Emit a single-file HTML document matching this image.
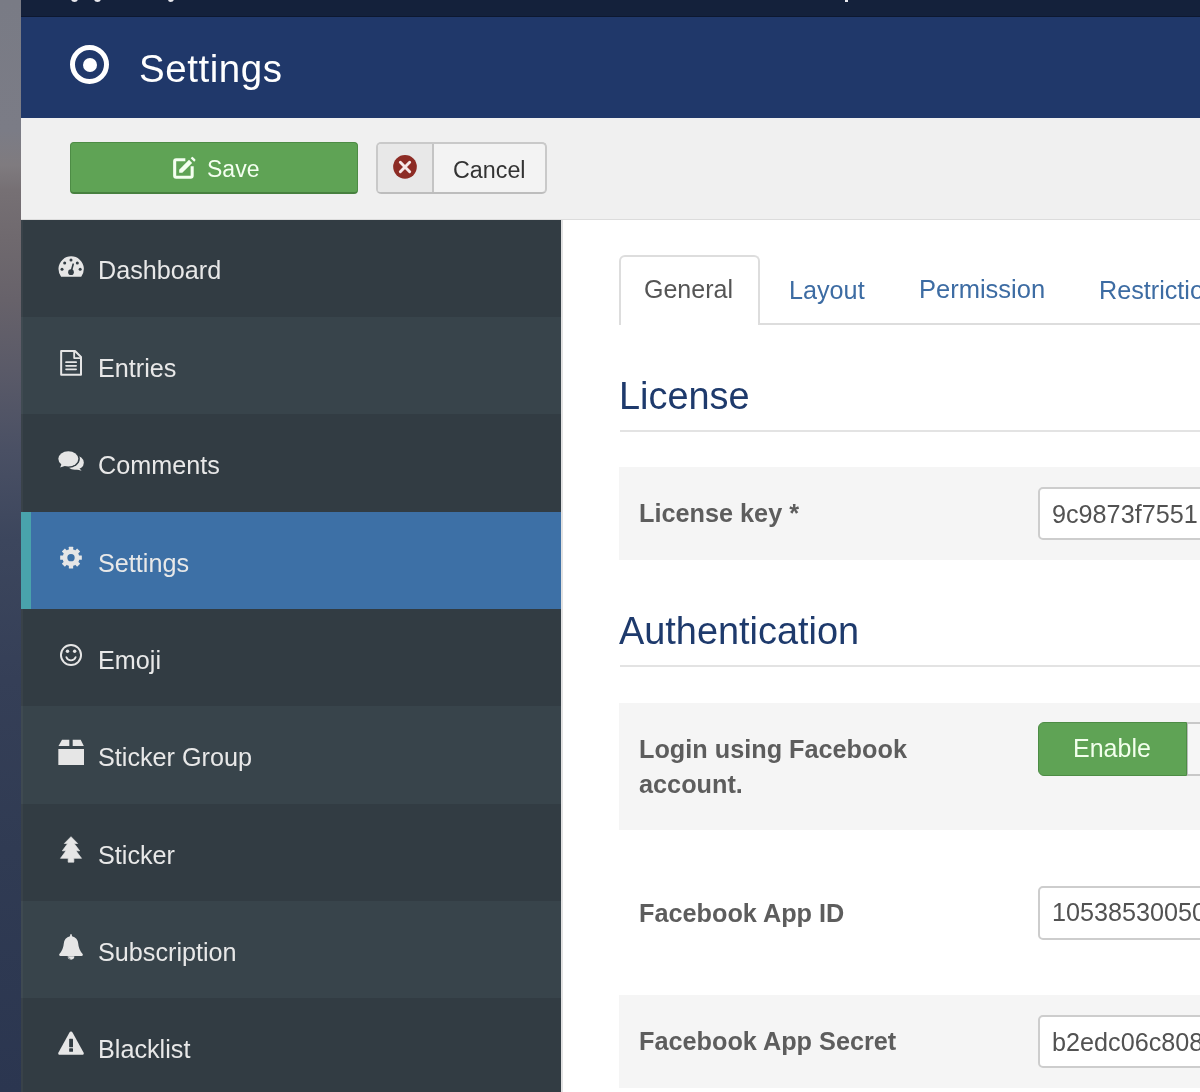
<!DOCTYPE html>
<html><head><meta charset="utf-8">
<style>
*{margin:0;padding:0;box-sizing:border-box}
html,body{width:1200px;height:1092px;overflow:hidden;background:#fff;font-family:"Liberation Sans",sans-serif}
.abs{position:absolute}
#wall{left:0;top:0;width:21px;height:1092px;background:linear-gradient(180deg,#797b85 0px,#7b7c86 130px,#7f7b7f 165px,#767074 190px,#6f696e 240px,#67626a 300px,#5a5a68 370px,#4a5064 450px,#3c465d 540px,#353f57 680px,#303b53 850px,#2b3650 1092px)}
#topbar{left:21px;top:0;width:1179px;height:17px;background:#14213b;border-bottom:1px solid #0d1830}
#header{left:21px;top:17px;width:1179px;height:101px;background:#20386a}
#toolbar{left:21px;top:118px;width:1179px;height:102px;background:#f0f0f0;border-bottom:1.5px solid #dcdcdc}
#sidebar{left:21px;top:220px;width:540px;height:872px;background:#323c43}
#content{left:561px;top:220px;width:639px;height:872px;background:#fff;border-left:2px solid #e2e2e2}
.t{position:absolute;white-space:nowrap;line-height:1}
body{-webkit-font-smoothing:antialiased}
.t,.lbl,.lab,h2,.inp span{will-change:transform}
.item{position:absolute;left:21px;width:540px;height:97.5px;box-shadow:inset 2px 0 0 rgba(255,255,255,0.035)}
.item .lbl{position:absolute;left:77px;top:38.6px;font-size:25.2px;color:#e8e8e8;line-height:1}
.item svg{position:absolute;left:31px;width:40px;height:35px}
.row{position:absolute;left:619px;width:581px;background:#f5f5f5}
.lab{position:absolute;left:639px;font-size:25.25px;font-weight:bold;color:#5d5d5d;line-height:1}
.inp{position:absolute;left:1038px;width:200px;height:53px;background:#fff;border:2px solid #cdcdcd;border-radius:5px}
.inp span{position:absolute;left:12px;top:12.5px;font-size:25.2px;color:#525252;line-height:1}
h2{position:absolute;left:619px;font-size:37.9px;font-weight:normal;color:#1e3a6c;line-height:1}
.hr{position:absolute;left:620px;width:580px;height:2px;background:#e3e3e3}
</style></head><body>
<div id="wall" class="abs"></div>
<div id="topbar" class="abs"></div>
<div class="abs" style="left:71px;top:-2px;width:7px;height:4px;background:#e8e8ee;border-radius:0 0 4px 4px"></div>
<div class="abs" style="left:94px;top:-2px;width:7px;height:4px;background:#e8e8ee;border-radius:0 0 4px 4px"></div>
<div class="abs" style="left:168px;top:-2px;width:6px;height:4px;background:#e8e8ee;border-radius:0 0 4px 3px"></div>
<div class="abs" style="left:845px;top:0px;width:3px;height:2px;background:#e8e8ee"></div>
<div id="header" class="abs"></div>
<div id="toolbar" class="abs"></div>
<div id="sidebar" class="abs"></div>
<div id="content" class="abs"></div>

<!-- header -->
<div class="abs" style="left:70px;top:45px;width:39px;height:39px;border:5px solid #fff;border-radius:50%"></div>
<div class="abs" style="left:82.5px;top:57.5px;width:14px;height:14px;background:#fff;border-radius:50%"></div>
<div class="t" style="left:139px;top:49.5px;font-size:38.5px;color:#fff;letter-spacing:0.55px">Settings</div>

<!-- toolbar -->
<div class="abs" style="left:70px;top:142px;width:288px;height:52px;background:#5fa355;border:1px solid #4d8c45;border-bottom:2px solid #47803f;border-radius:4px"></div>
<svg class="abs" style="left:165px;top:150px;width:40px;height:35px" viewBox="0 0 1200 1050">
 <path d="M610 290 L335 290 Q290 290 290 335 L290 770 Q290 815 335 815 L770 815 Q815 815 815 770 L815 490" fill="none" stroke="#f4fff0" stroke-width="92"/>
 <path d="M425 590 L720 295 L815 390 L520 685 L425 685 Z" fill="#f4fff0"/>
 <path d="M770 245 L800 215 Q820 195 840 215 L905 280 Q925 300 905 320 L875 350 Z" fill="#f4fff0"/>
</svg>
<div class="t" style="left:207px;top:158px;font-size:23px;color:#f4fff0">Save</div>
<div class="abs" style="left:376px;top:142px;width:171px;height:52px;background:#f3f3f3;border:2px solid #c9c9c9;border-bottom-color:#bdbdbd;border-radius:5px"></div>
<div class="abs" style="left:378px;top:144px;width:56px;height:48px;background:#e8e8e8;border-right:2px solid #c4c4c4;border-radius:3px 0 0 3px"></div>
<svg class="abs" style="left:385px;top:150px;width:40px;height:35px" viewBox="0 0 1200 1050">
 <circle cx="600" cy="505" r="355" fill="#8d2c25"/>
 <path d="M460 370 L740 650 M740 370 L460 650" stroke="#f6e8e8" stroke-width="88" stroke-linecap="round"/>
</svg>
<div class="t" style="left:453px;top:159px;font-size:23.3px;color:#333">Cancel</div>

<!-- sidebar items -->
<div class="item" style="top:220px;height:97px;background:#323c43">
  <svg style="top:30px" viewBox="0 0 1200 1050">
  <path d="M273 800 A380 380 0 1 1 877 800 Z" fill="#e6e6e6"/>
  <g fill="#323c43"><circle cx="300" cy="575" r="45"/><circle cx="380" cy="390" r="45"/><circle cx="570" cy="300" r="45"/><circle cx="760" cy="390" r="45"/><circle cx="845" cy="575" r="45"/><circle cx="570" cy="665" r="85"/></g>
  <path d="M570 665 L635 425" stroke="#323c43" stroke-width="48" stroke-linecap="round"/>
 </svg>
 <div class="lbl" style="top:37.6px">Dashboard</div></div>
<div class="item" style="top:317px;background:#38444b">
 <svg style="top:28px" viewBox="0 0 1200 1050">
  <path d="M275 180 L690 180 L870 360 L870 895 L275 895 Z" fill="none" stroke="#e6e6e6" stroke-width="60" stroke-linejoin="round"/>
  <path d="M665 180 L665 392 L870 392" fill="none" stroke="#e6e6e6" stroke-width="55" stroke-linejoin="round"/>
  <path d="M420 515 L725 515 M420 625 L725 625 M420 730 L725 730" stroke="#e6e6e6" stroke-width="50" stroke-linecap="round"/>
 </svg>
 <div class="lbl">Entries</div></div>
<div class="item" style="top:414px;background:#323c43">
 <svg style="top:31px" viewBox="0 0 1200 1050">
  <ellipse cx="690" cy="530" rx="265" ry="215" fill="#e6e6e6"/>
  <path d="M780 660 L890 775 L690 720 Z" fill="#e6e6e6"/>
  <ellipse cx="490" cy="415" rx="345" ry="272" fill="#323c43"/>
  <path d="M250 680 L300 540 L470 640 Z" fill="#323c43"/>
  <ellipse cx="490" cy="415" rx="300" ry="228" fill="#e6e6e6"/>
  <path d="M290 560 L245 675 L430 615 Z" fill="#e6e6e6"/>
 </svg>
 <div class="lbl">Comments</div></div>
<div class="item" style="top:512px;background:#3d70a6">
 <div class="abs" style="left:0;top:0;width:10px;height:97.5px;background:#49a3ac"></div>
 <svg style="top:28px" viewBox="0 0 1200 1050">
  <g fill="#e6e6e6">
   <circle cx="570" cy="530" r="255"/>
   <g id="tooth"><rect x="505" y="205" width="130" height="650" rx="10"/></g>
   <rect x="505" y="205" width="130" height="650" rx="10" transform="rotate(45 570 530)"/>
   <rect x="505" y="205" width="130" height="650" rx="10" transform="rotate(90 570 530)"/>
   <rect x="505" y="205" width="130" height="650" rx="10" transform="rotate(135 570 530)"/>
  </g>
  <circle cx="570" cy="530" r="110" fill="#3d70a6"/>
 </svg>
 <div class="lbl">Settings</div></div>
<div class="item" style="top:609px;background:#323c43">
 <svg style="top:28px" viewBox="0 0 1200 1050">
  <circle cx="570" cy="540" r="302" fill="none" stroke="#e6e6e6" stroke-width="58"/>
  <circle cx="465" cy="430" r="52" fill="#e6e6e6"/><circle cx="680" cy="430" r="52" fill="#e6e6e6"/>
  <path d="M430 605 A150 150 0 0 0 710 605" fill="none" stroke="#e6e6e6" stroke-width="52" stroke-linecap="round"/>
 </svg>
 <div class="lbl">Emoji</div></div>
<div class="item" style="top:706px;background:#38444b">
 <svg style="top:29px" viewBox="0 0 1200 1050">
  <g fill="#e6e6e6">
   <rect x="190" y="420" width="770" height="480"/>
   <path d="M300 145 L520 145 L520 330 L195 330 Z"/>
   <path d="M620 145 L860 145 L955 330 L620 330 Z"/>
  </g>
 </svg>
 <div class="lbl">Sticker Group</div></div>
<div class="item" style="top:804px;background:#323c43">
 <svg style="top:28px" viewBox="0 0 1200 1050">
  <path d="M570 140 L770 345 L665 345 L830 565 L720 565 L885 790 L655 790 L655 905 L485 905 L485 790 L255 790 L420 565 L310 565 L470 345 L370 345 Z" fill="#e6e6e6" stroke="#e6e6e6" stroke-width="20" stroke-linejoin="round"/>
 </svg>
 <div class="lbl">Sticker</div></div>
<div class="item" style="top:901px;background:#38444b">
 <svg style="top:29px" viewBox="0 0 1200 1050">
  <path d="M570 120 Q600 120 600 185 Q770 230 785 400 Q800 600 925 730 Q935 780 890 780 L250 780 Q205 780 215 730 Q340 600 355 400 Q370 230 540 185 Q540 120 570 120 Z" fill="#e6e6e6"/>
  <path d="M470 790 A100 100 0 0 0 670 790 Z" fill="#e6e6e6"/>
  <path d="M490 800 A80 80 0 0 0 560 875" fill="none" stroke="#38444b" stroke-width="14"/>
 </svg>
 <div class="lbl">Subscription</div></div>
<div class="item" style="top:998px;background:#323c43">
 <svg style="top:29px" viewBox="0 0 1200 1050">
  <path d="M570 135 Q600 135 620 170 L950 770 Q970 830 900 830 L240 830 Q170 830 190 770 L520 170 Q540 135 570 135 Z" fill="#e6e6e6"/>
  <rect x="515" y="350" width="115" height="255" rx="15" fill="#323c43"/>
  <rect x="515" y="635" width="115" height="105" rx="15" fill="#323c43"/>
 </svg>
 <div class="lbl">Blacklist</div></div>

<!-- tabs -->
<div class="abs" style="left:620px;top:323px;width:580px;height:2px;background:#ddd"></div>
<div class="abs" style="left:619px;top:255px;width:141px;height:70px;background:#fff;border:2px solid #ddd;border-bottom:none;border-radius:6px 6px 0 0"></div>
<div class="t" style="left:644px;top:277px;font-size:25px;color:#555">General</div>
<div class="t" style="left:789px;top:277.5px;font-size:25.2px;color:#3d6ca3">Layout</div>
<div class="t" style="left:919px;top:277.3px;font-size:25.5px;color:#3d6ca3">Permission</div>
<div class="t" style="left:1099px;top:277.5px;font-size:25.2px;color:#3d6ca3">Restrictions</div>

<!-- License -->
<h2 style="top:378px">License</h2>
<div class="hr" style="top:430px"></div>
<div class="row" style="top:467px;height:93px"></div>
<div class="lab" style="top:501.3px">License key *</div>
<div class="inp" style="top:487px"><span>9c9873f7551</span></div>

<!-- Authentication -->
<h2 style="top:613px">Authentication</h2>
<div class="hr" style="top:665px"></div>
<div class="row" style="top:703px;height:127px"></div>
<div class="lab" style="top:737px">Login using Facebook</div>
<div class="lab" style="top:772px">account.</div>
<div class="abs" style="left:1038px;top:722px;width:149px;height:54px;background:#5fa355;border:1px solid #4d8c45;border-radius:6px 0 0 6px"></div>
<div class="abs" style="left:1187px;top:722px;width:20px;height:54px;background:#f6f6f6;border:2px solid #c8c8c8;border-left:1px solid #bbb"></div>
<div class="t" style="left:1073px;top:736px;font-size:25px;color:#f2ffec">Enable</div>

<div class="lab" style="top:900.5px">Facebook App ID</div>
<div class="inp" style="top:886px;height:53.5px"><span style="top:11.5px">10538530050</span></div>

<div class="row" style="top:995px;height:93px"></div>
<div class="lab" style="top:1029px">Facebook App Secret</div>
<div class="inp" style="top:1015px"><span>b2edc06c808</span></div>

</body></html>
